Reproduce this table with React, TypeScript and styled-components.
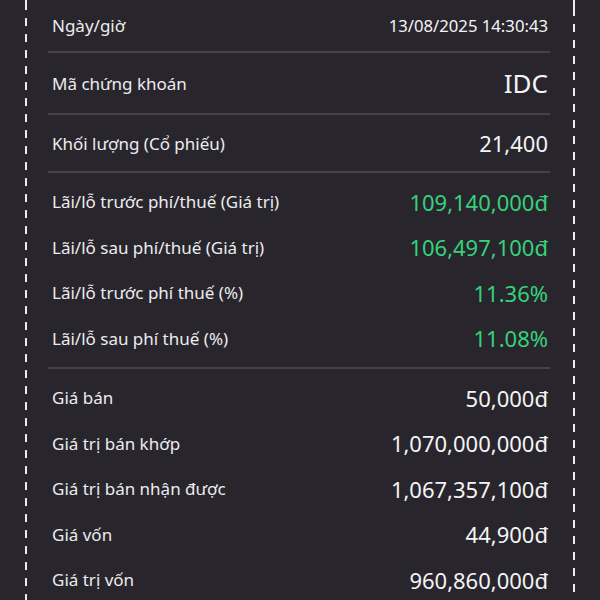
import React from "react";
import styled, { createGlobalStyle } from "styled-components";

const GlobalStyle = createGlobalStyle`
  html, body {
    margin: 0;
    padding: 0;
    background: #28262c;
    overflow: hidden;
  }
  body {
    font-family: "Noto Sans", "Open Sans", sans-serif;
    color: #f2f2f4;
  }
`;

const Page = styled.div`
  display: flex;
  align-items: stretch;
  width: 600px;
  height: 600px;
  box-sizing: border-box;
  padding: 0 25px;
  background: #28262c;
  overflow: hidden;
`;

const DashLine = styled.div<{ $phase: number }>`
  flex: 0 0 2px;
  width: 2px;
  background-image: repeating-linear-gradient(
    to bottom,
    #ececee 0px,
    #ececee 8px,
    transparent 8px,
    transparent 16px
  );
  background-position: 0 ${(p) => p.$phase}px;
`;

const Content = styled.div`
  flex: 1 1 auto;
  min-width: 0;
  display: flex;
  flex-direction: column;
  margin: 0 23px 0 21px;
`;

const Divider = styled.div`
  flex: 0 0 2px;
  height: 2px;
  background: #45434a;
`;

const Section = styled.div<{ $pad: number }>`
  flex: 0 0 auto;
  display: flex;
  flex-direction: column;
  padding: ${(p) => p.$pad}px 0;
`;

const Row = styled.div<{ $h: number }>`
  flex: 0 0 ${(p) => p.$h}px;
  display: flex;
  align-items: center;
  justify-content: space-between;
  height: ${(p) => p.$h}px;
  padding: 0 2px 0 4px;
`;

const Label = styled.span`
  font-size: 17px;
  color: #ececee;
  white-space: nowrap;
`;

const Value = styled.span<{ $size: number; $green?: boolean }>`
  font-size: ${(p) => p.$size}px;
  color: ${(p) => (p.$green ? "#35d27a" : "#f4f4f6")};
  white-space: nowrap;
`;

type Item = { label: string; value: string; size: number; h?: number; green?: boolean };

const top: Item[] = [
  { label: "Ngày/giờ", value: "13/08/2025 14:30:43", size: 16.7, h: 51 },
  { label: "Mã chứng khoán", value: "IDC", size: 26, h: 60 },
  { label: "Khối lượng (Cổ phiếu)", value: "21,400", size: 22, h: 56 },
];

const profit: Item[] = [
  { label: "Lãi/lỗ trước phí/thuế (Giá trị)", value: "109,140,000đ", size: 22, green: true },
  { label: "Lãi/lỗ sau phí/thuế (Giá trị)", value: "106,497,100đ", size: 22, green: true },
  { label: "Lãi/lỗ trước phí thuế (%)", value: "11.36%", size: 22, green: true },
  { label: "Lãi/lỗ sau phí thuế (%)", value: "11.08%", size: 22, green: true },
];

const sale: Item[] = [
  { label: "Giá bán", value: "50,000đ", size: 22 },
  { label: "Giá trị bán khớp", value: "1,070,000,000đ", size: 22 },
  { label: "Giá trị bán nhận được", value: "1,067,357,100đ", size: 22 },
  { label: "Giá vốn", value: "44,900đ", size: 22 },
  { label: "Giá trị vốn", value: "960,860,000đ", size: 22 },
];

function renderRow(it: Item, h: number) {
  return (
    <Row key={it.label} $h={it.h ?? h}>
      <Label>{it.label}</Label>
      <Value $size={it.size} $green={it.green}>
        {it.value}
      </Value>
    </Row>
  );
}

export default function App() {
  return (
    <>
      <GlobalStyle />
      <Page>
        <DashLine $phase={2} />
        <Content>
          {top.map((it) => (
            <React.Fragment key={it.label}>
              {renderRow(it, 60)}
              <Divider />
            </React.Fragment>
          ))}
          <Section $pad={6}>{profit.map((it) => renderRow(it, 45.5))}</Section>
          <Divider />
          <Section $pad={6}>{sale.map((it) => renderRow(it, 45.5))}</Section>
        </Content>
        <DashLine $phase={8} />
      </Page>
    </>
  );
}
